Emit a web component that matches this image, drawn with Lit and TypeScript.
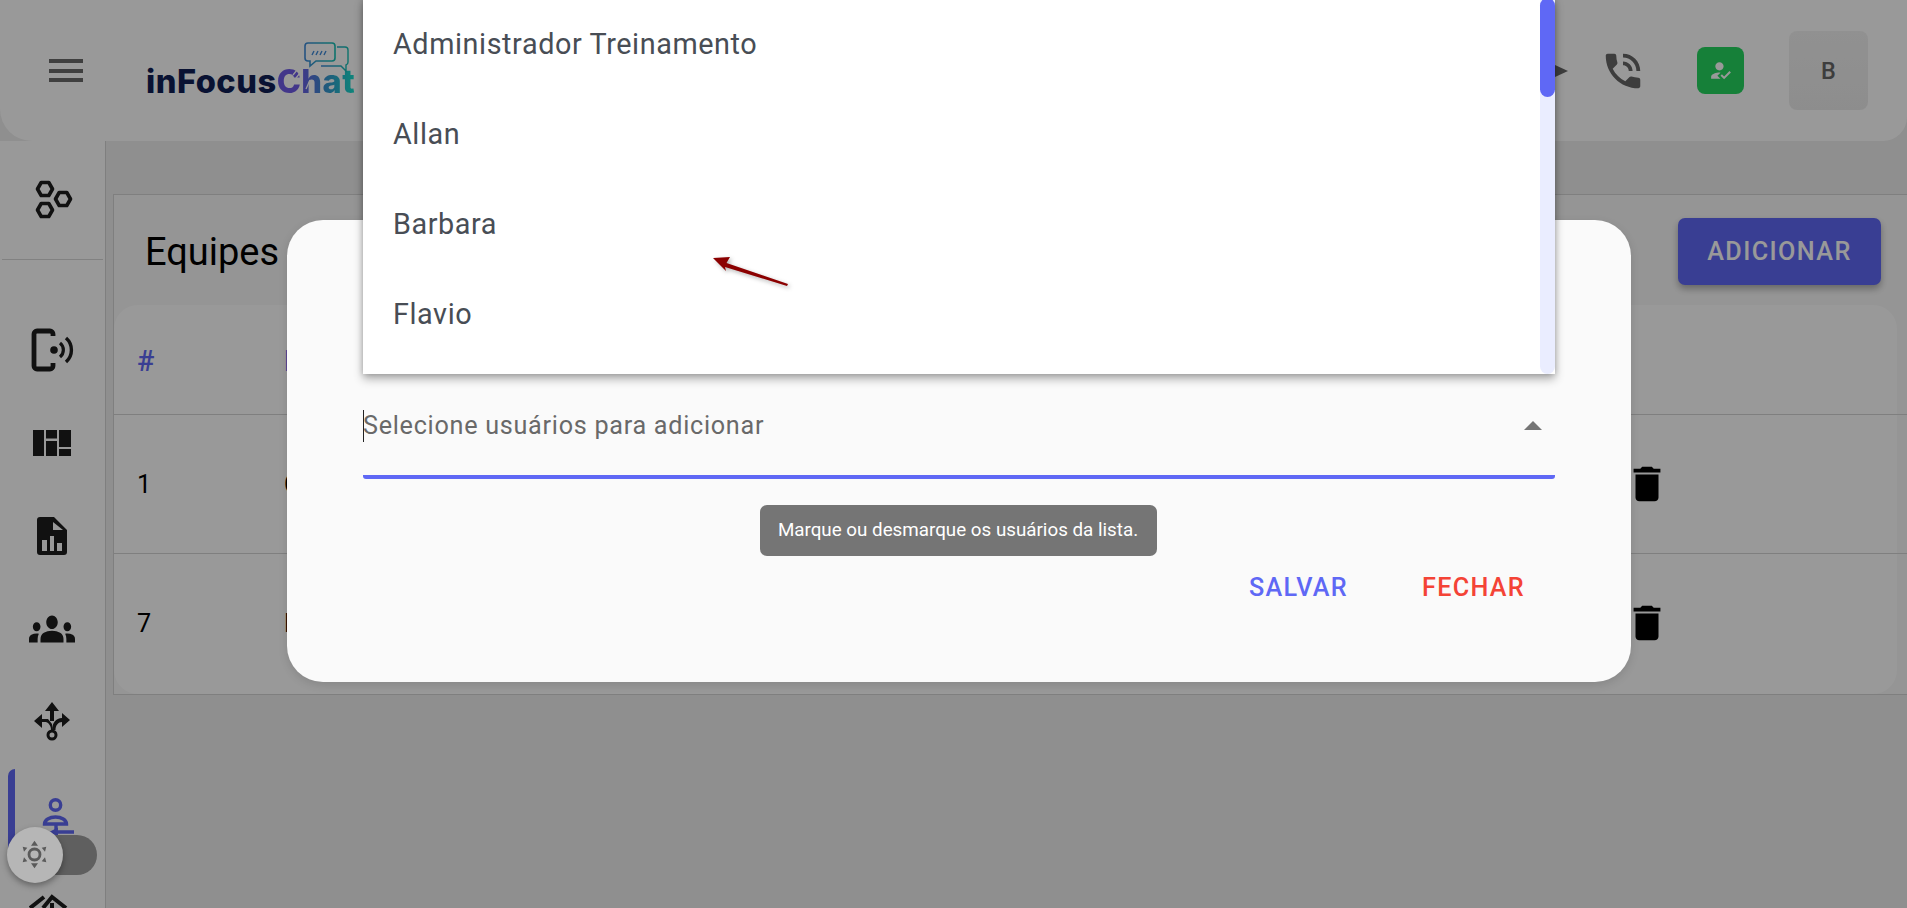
import { LitElement, html, css } from "lit";
import { customElement } from "lit/decorators.js";

@customElement("app-root")
export class AppRoot extends LitElement {
  static styles = css`
    :host { display: block; width: 1907px; height: 908px; position: relative; overflow: hidden; font-family: Roboto, "Liberation Sans", sans-serif; background: #eeeeee; }
    * { box-sizing: border-box; }
    .page { display: flex; flex-direction: column; height: 908px; }
    header { flex: none; height: 141px; background: #fff; border-radius: 0 0 24px 32px; display: flex; align-items: center; padding: 0 39px 0 49px; }
    .menu-btn { display: flex; flex-direction: column; gap: 5.5px; width: 34px; }
    .menu-btn i { display: block; height: 4px; background: #696969; }
    .logo { position: relative; margin-left: 63px; margin-top: 21px; font: 800 32.6px/1 Inter, sans-serif; letter-spacing: 0.5px; white-space: nowrap; }
    .logo b { font-weight: 800; color: #101f55; }
    .logo .chat { background: linear-gradient(90deg, #6e5ae6 0%, #6e5ae6 30%, #3a8fd0 60%, #16e0cc 100%); -webkit-background-clip: text; background-clip: text; color: transparent; }
    .logo svg { position: absolute; left: 157px; top: -23px; overflow: visible; }
    .spacer { flex: 1; }
    .tri { width: 0; height: 0; border-left: 13px solid #666; border-top: 6px solid transparent; border-bottom: 6px solid transparent; margin-right: 32px; }
    .phone { display: block; width: 46px; height: 46px; fill: #666; margin-right: 51px; }
    .badge { width: 47px; height: 47px; border-radius: 8px; background: #26d560; display: flex; align-items: center; justify-content: center; margin-right: 45px; }
    .badge svg { width: 25px; height: 25px; fill: #fff; }
    .avatar { width: 79px; height: 79px; border-radius: 8px; background: linear-gradient(180deg, #f2f2f2, #ececec); display: flex; align-items: center; justify-content: center; font-size: 23.4px; font-weight: 500; color: #666; }

    .body { flex: 1; display: flex; min-height: 0; }
    aside { flex: none; width: 106px; background: #fff; border-right: 1px solid #d4d4d4; display: flex; flex-direction: column; overflow: hidden; }
    .top-ico { flex: none; height: 119px; padding-top: 34px; margin: 0 2px; border-bottom: 1px solid #d8d8d8; display: flex; justify-content: center; align-items: flex-start; }
    .nav { display: flex; flex-direction: column; padding-top: 43px; }
    .nav-item { flex: none; height: 93px; display: flex; align-items: center; justify-content: center; position: relative; padding-right: 2px; }
    .ico { width: 46px; height: 46px; display: block; flex: none; color: #1d1d1d; }
    .nav-item.active .ico { color: #5f68f5; }
    .nav-item.active::before { content: ""; position: absolute; left: 8px; top: 1px; width: 7px; height: 92px; background: #5f68f5; border-radius: 14px 0 0 14px; }

    main { flex: 1; min-width: 0; padding: 53px 0 0 7px; overflow: hidden; }
    .card { width: calc(100% + 40px); border: 1px solid #d4d4d4; height: 501px; background: #f9f9f9; }
    .title-row { height: 110px; display: flex; justify-content: space-between; align-items: flex-start; padding: 23px 65px 0 31px; }
    h1 { margin: 15px 0 0; font-size: 38px; font-weight: 400; line-height: 1; color: #000; }
    .add { width: 203px; height: 67px; border-radius: 7px; border: 0; background: #5f68f5; color: #fff; font: 500 25.2px Roboto, sans-serif; letter-spacing: 1.4px; box-shadow: 0 4px 7px rgba(0,0,0,.3); }
    .table { margin-right: 49px; height: 389px; background: #fff; border-radius: 24px; }
    .row { display: flex; align-items: center; margin-right: -49px; padding-left: 23px; font-size: 25.2px; color: #000; }
    .row.h { height: 109px; padding-top: 2px; color: #5f68f5; font-weight: 500; font-size: 28.8px; }
    .row.b { height: 139px; border-top: 1.5px solid #d4d4d4; }
    .num { width: 147px; flex: none; }
    .name { flex: 1; }
    .row svg { width: 46px; height: 46px; fill: #000; margin-right: 276px; display: block; flex: none; }

    .backdrop { position: absolute; inset: 0; background: rgba(0,0,0,.4); }

    .dialog { position: absolute; left: 287px; top: 220px; width: 1344px; height: 462px; background: #fafafa; border-radius: 36px; padding: 154px 76px 0; display: flex; flex-direction: column; box-shadow: 0 3px 10px rgba(0,0,0,.12); }
    .field { flex: none; height: 105px; border-bottom: 4px solid #5f68f5; border-radius: 0 0 3px 3px; display: flex; align-items: center; justify-content: space-between; padding: 0 12px 0 0; position: relative; font-size: 25.2px; color: #696969; letter-spacing: 0.72px; }
    .field span { line-height: 32px; margin-top: 3px; position: relative; }
    .field span::before { content: ""; position: absolute; left: 0; top: 0; width: 1px; height: 32px; background: #222; }
    .caret { width: 0; height: 0; border-left: 9.5px solid transparent; border-right: 9.5px solid transparent; border-bottom: 9.5px solid #757575; margin-top: 1px; margin-right: 1px; }
    .tip { align-self: center; margin-top: 26px; margin-left: -2px; height: 51px; width: 397px; padding-bottom: 2px; background: #757575; border-radius: 7px; color: #fff; font-size: 18.8px; display: flex; align-items: center; justify-content: center; }
    .actions { display: flex; justify-content: flex-end; gap: 14px; padding-top: 1px; }
    .actions button { border: 0; background: none; font: 500 25.2px Roboto, sans-serif; letter-spacing: 1.3px; height: 60px; padding: 0 30px; }
    .save { color: #5f68f5; }
    .close { color: #f44336; }

    .menu { position: absolute; left: 76px; top: -222px; width: 1192px; height: 376px; background: #fff; box-shadow: 0 5px 9px rgba(0,0,0,.3), 0 0 6px rgba(0,0,0,.2); overflow: hidden; }
    .menu-item { height: 90px; padding: 2px 30px 0; display: flex; align-items: center; font-size: 28.8px; letter-spacing: 0.58px; color: #484d55; }
    .track { position: absolute; right: 0; top: 0; width: 15px; height: 100%; background: #eaedff; border-radius: 0 0 8px 8px; }
    .thumb { position: absolute; left: 0; top: 0; width: 15px; height: 99px; background: #5f68f5; border-radius: 8px; }
    .arrow { position: absolute; left: 350px; top: 258px; width: 90px; height: 40px; overflow: visible; filter: drop-shadow(2px 2px 2px rgba(0,0,0,.3)); }

    .toggle { position: absolute; left: 25px; top: 835px; width: 72px; height: 40px; border-radius: 20px; background: #5f5f5f; }
    .knob { position: absolute; left: -18px; top: -8px; width: 56px; height: 56px; border-radius: 50%; background: #b6b6b6; box-shadow: 0 3px 6px rgba(0,0,0,.35); display: flex; align-items: center; justify-content: center; }
    .knob svg { width: 34px; height: 34px; display: block; }
  `;

  render() {
    const trash = html`<svg viewBox="0 0 24 24"><path d="M6 19c0 1.1.9 2 2 2h8c1.1 0 2-.9 2-2V7H6v12zM19 4h-3.5l-1-1h-5l-1 1H5v2h14V4z"/></svg>`;
    return html`
      <div class="page">
        <header>
          <div class="menu-btn"><i></i><i></i><i></i></div>
          <div class="logo">
            <b>inFocus</b><span class="chat">Chat</span>
            <svg width="52" height="36" viewBox="0 0 52 36" fill="none">
              <defs><linearGradient id="lg" x1="0" x2="1"><stop offset="0" stop-color="#3f8ad8"/><stop offset="1" stop-color="#18c0b4"/></linearGradient></defs>
              <path d="M-10 33l4-5M-7 36l4-5M3 47l4-9" stroke="#fff" stroke-width="1.3"/>
              <path d="M34 5h8a3 3 0 0 1 3 3v12a3 3 0 0 1-2 3v6l-5-5H18" stroke="url(#lg)" stroke-width="1.4"/>
              <path d="M5 1h24a3 3 0 0 1 3 3v12a3 3 0 0 1-3 3H13l-6 5v-5H5a3 3 0 0 1-3-3V4a3 3 0 0 1 3-3z" stroke="url(#lg)" stroke-width="1.6"/>
              <path d="M9 13l2-4M13 13l2-4M17 13l2-4M21 13l2-4" stroke="#3f8ad8" stroke-width="1.4"/>
            </svg>
          </div>
          <div class="spacer"></div>
          <div class="tri"></div>
          <svg class="phone" viewBox="0 0 24 24"><path d="M20 15.5c-1.25 0-2.45-.2-3.57-.57-.35-.11-.74-.03-1.02.24l-2.2 2.2c-2.83-1.44-5.15-3.75-6.59-6.59l2.2-2.21c.28-.26.36-.65.25-1C8.7 6.45 8.5 5.25 8.5 4c0-.55-.45-1-1-1H4c-.55 0-1 .45-1 1 0 9.39 7.61 17 17 17 .55 0 1-.45 1-1v-3.5c0-.55-.45-1-1-1zM19 12h2c0-4.97-4.03-9-9-9v2c3.87 0 7 3.13 7 7zm-4 0h2c0-2.76-2.24-5-5-5v2c1.66 0 3 1.34 3 3z"/></svg>
          <div class="badge"><svg viewBox="0 0 24 24"><path d="M9 17l3-2.94c-.39-.04-.68-.06-1-.06-2.67 0-8 1.34-8 4v2h9l-3-3zm2-5c2.21 0 4-1.79 4-4s-1.79-4-4-4-4 1.79-4 4 1.79 4 4 4m4.47 8.5L12 17l1.4-1.41 2.07 2.08 5.13-5.17 1.4 1.41z"/></svg></div>
          <div class="avatar">B</div>
        </header>
        <div class="body">
          <aside>
            <div class="top-ico">
              <svg class="ico" viewBox="0 0 46 46" fill="none" stroke="currentColor" stroke-width="3.6" stroke-linejoin="round">
                <polygon points="7.5,14 11.2,7.5 18.8,7.5 22.5,14 18.8,20.5 11.2,20.5"/>
                <polygon points="25.5,24 29.2,17.5 36.8,17.5 40.5,24 36.8,30.5 29.2,30.5"/>
                <polygon points="7.5,35 11.2,28.5 18.8,28.5 22.5,35 18.8,41.5 11.2,41.5"/>
              </svg>
            </div>
            <div class="nav">
              <div class="nav-item">
                <svg class="ico" viewBox="0 0 46 46" fill="none" stroke="currentColor">
                  <path d="M24 9V7a3 3 0 0 0-3-3H8a3 3 0 0 0-3 3v32a3 3 0 0 0 3 3h13a3 3 0 0 0 3-3v-3" stroke-width="4.8"/>
                  <circle cx="25" cy="23" r="3.8" fill="currentColor" stroke="none"/>
                  <path d="M31 16a9 9 0 0 1 0 14" stroke-width="3.2"/>
                  <path d="M37 11a16 16 0 0 1 0 24" stroke-width="3.4"/>
                </svg>
              </div>
              <div class="nav-item">
                <svg class="ico" viewBox="0 0 46 46" fill="currentColor">
                  <rect x="4" y="10" width="11" height="26"/><rect x="17" y="10" width="11" height="8.5"/><rect x="17" y="21" width="11" height="15"/><rect x="30" y="10" width="12" height="17"/><rect x="30" y="29" width="12" height="7"/>
                </svg>
              </div>
              <div class="nav-item">
                <svg class="ico" viewBox="0 0 46 46" fill="currentColor">
                  <path fill-rule="evenodd" d="M11 4H25L38 17V39a3 3 0 0 1-3 3H11a3 3 0 0 1-3-3V7a3 3 0 0 1 3-3ZM24 9V17H34ZM13 27V38H18V27ZM21 23V38H25V23ZM28 30V38H33V30Z"/>
                </svg>
              </div>
              <div class="nav-item">
                <svg class="ico" viewBox="0 1.8 24 20.4" preserveAspectRatio="none" fill="currentColor"><path d="M12 12.75c1.63 0 3.07.39 4.24.9 1.08.48 1.76 1.56 1.76 2.73V18H6v-1.61c0-1.18.68-2.26 1.76-2.73 1.17-.52 2.61-.91 4.24-.91zM4 13c1.1 0 2-.9 2-2s-.9-2-2-2-2 .9-2 2 .9 2 2 2zm1.13 1.1c-.37-.06-.74-.1-1.13-.1-.99 0-1.93.21-2.78.58C.48 14.9 0 15.62 0 16.43V18h4.5v-1.61c0-.83.23-1.61.63-2.29zM20 13c1.1 0 2-.9 2-2s-.9-2-2-2-2 .9-2 2 .9 2 2 2zm4 3.43c0-.81-.48-1.53-1.22-1.85-.85-.37-1.79-.58-2.78-.58-.39 0-.76.04-1.13.1.4.68.63 1.46.63 2.29V18H24v-1.57zM12 6c1.66 0 3 1.34 3 3s-1.34 3-3 3-3-1.34-3-3 1.34-3 3-3z"/></svg>
              </div>
              <div class="nav-item">
                <svg class="ico" viewBox="0 0 46 46" fill="currentColor">
                  <path d="M23 3l7 9h-5v10h-4V12h-5zM5 22l8-7v5h6l4 5v6h-1c0-4-2-7-5-8h-4v6zM41 21l-8-7v5c-6 0-10 5-10 12h3.5c0-5 3-8 6.5-8v5z"/>
                  <circle cx="23" cy="36" r="4" fill="none" stroke="currentColor" stroke-width="3"/>
                </svg>
              </div>
              <div class="nav-item active">
                <svg class="ico" viewBox="0 0 46 46" fill="none" stroke="currentColor">
                  <circle cx="26.5" cy="13" r="5.2" stroke-width="3.4"/>
                  <path d="M15.5 32c0-4 5-7 11-7s11 3 11 7z" stroke-width="3.4"/>
                  <path d="M27 33v5M26 40h19" stroke-width="3.4"/>
                  <path d="M20 40l9-4.5v9z" fill="currentColor" stroke="none"/>
                </svg>
              </div>
              <div class="nav-item">
                <svg class="ico" viewBox="0 0 46 46" fill="none" stroke="currentColor" stroke-width="4">
                  <path d="M1 23L15 12M14 23L23 12L37 23M23 18V23"/>
                </svg>
              </div>
            </div>
          </aside>
          <main>
            <div class="card">
              <div class="title-row">
                <h1>Equipes</h1>
                <button class="add">ADICIONAR</button>
              </div>
              <div class="table">
                <div class="row h"><div class="num">#</div><div class="name">Nome</div></div>
                <div class="row b"><div class="num">1</div><div class="name">Comercial</div>${trash}</div>
                <div class="row b"><div class="num">7</div><div class="name">Equipe</div>${trash}</div>
              </div>
            </div>
          </main>
        </div>
      </div>

      <div class="backdrop"></div>

      <div class="toggle">
        <div class="knob">
          <svg viewBox="0 0 34 34">
            <circle cx="16.5" cy="16.5" r="5.5" fill="none" stroke="#5a5a5a" stroke-width="2.8"/>
            <path d="M16.5 2.7L20 7.7H13ZM16.5 30.3L20 25.3H13ZM4.7 8.7L9.3 9.7L6 13.7ZM28.3 8.7L23.7 9.7L27 13.7ZM4.7 24.3L9.3 23.3L6 19.3ZM28.3 24.3L23.7 23.3L27 19.3Z" fill="#5a5a5a"/>
          </svg>
        </div>
      </div>

      <div class="dialog">
        <div class="field"><span>Selecione usuários para adicionar</span><div class="caret"></div></div>
        <div class="tip">Marque ou desmarque os usuários da lista.</div>
        <div class="actions"><button class="save">SALVAR</button><button class="close">FECHAR</button></div>
        <div class="menu">
          <div class="menu-item">Administrador Treinamento</div>
          <div class="menu-item">Allan</div>
          <div class="menu-item">Barbara</div>
          <div class="menu-item">Flavio</div>
          <div class="track"><div class="thumb"></div></div>
          <svg class="arrow" viewBox="0 0 90 40"><path d="M0 2L17 1L13.5 7L75 28L74 30L12 11L13 15Z" fill="#8b0000"/></svg>
        </div>
      </div>
    `;
  }
}
